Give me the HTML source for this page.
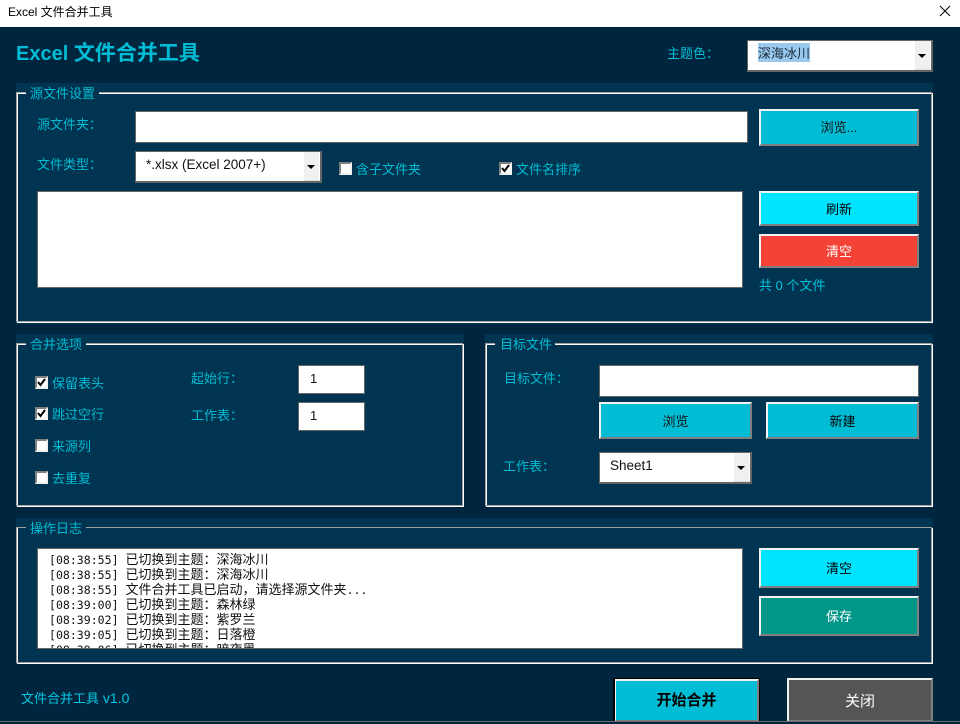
<!DOCTYPE html>
<html lang="zh">
<head>
<meta charset="utf-8">
<title>Excel 文件合并工具</title>
<style>
html,body{margin:0;padding:0}
body{width:960px;height:722px;overflow:hidden;position:relative;background:#00253f;font-family:"Liberation Sans","Noto Sans CJK SC",sans-serif;font-size:13px}
div,span.a{position:absolute;box-sizing:border-box;white-space:nowrap}
.panel{background:#003450}
.frame{border:1px solid #a0a0a0;box-shadow:1px 1px 0 #fff,inset 1px 1px 0 #fff}
.gap{background:#003450;height:6px}
.t{color:#00bcd4;height:20px;line-height:20px;margin-top:1px}
.input{background:#fff;border:1px solid #666}
.btn{border-style:solid;border-width:2px;border-color:#f2f2f2 #808080 #808080 #f2f2f2;text-align:center;color:#000}
.combo{background:#fff;border:1px solid #666;border-right:2px solid #666;border-bottom:2px solid #666;color:#111;line-height:26px;padding-left:10px;font-size:13.5px}
.arrow{right:0;top:0;bottom:0;width:17px;background:#f0f0f0;border-left:1px solid #fff;border-right:1px solid #fff;border-bottom:1px solid #ddd}
.arrow:after{content:"";position:absolute;left:3px;top:13px;border-style:solid;border-width:4px 4px 0;border-color:#000 transparent transparent}
.chk{width:13px;height:13px;background:#fff;border:2px solid;border-color:#808080 #f0f0f0 #f0f0f0 #808080}
.chk svg{position:absolute;left:0;top:0}
</style>
</head>
<body>
<div style="left:0;top:0;width:960px;height:27px;background:#fff"></div>
<div style="left:8px;top:3px;height:20px;line-height:18px;color:#000;font-size:12px">Excel 文件合并工具</div>
<svg style="position:absolute;left:939px;top:5px" width="12" height="12" viewBox="0 0 12 12"><path d="M1 1L11 11M11 1L1 11" stroke="#000" stroke-width="1" fill="none"/></svg>

<div style="left:16px;top:41px;height:28px;line-height:26px;font-size:21px;font-weight:bold;color:#00bcd4"><span style="font-size:20px">Excel </span>文件合并工具</div>
<div class="t" style="left:667px;top:43px">主题色：</div>
<div class="combo" style="left:747px;top:40px;width:186px;height:32px"><div class="arrow"></div></div>
<div style="left:758px;top:43px;width:52px;height:19px;background:#99c9ef;color:#1a2a3a;line-height:21px">深海冰川</div>

<!-- Source panel -->
<div class="panel" style="left:16px;top:83px;width:917px;height:241px"></div>
<div class="frame" style="left:16px;top:92px;width:916px;height:230px"></div>
<div class="gap" style="left:26px;top:90px;width:73px"></div>
<div class="t" style="left:30px;top:83px">源文件设置</div>
<div class="t" style="left:37px;top:114px">源文件夹：</div>
<div class="input" style="left:135px;top:111px;width:613px;height:32px"></div>
<div class="btn" style="left:759px;top:109px;width:160px;height:37px;background:#00bcd4;line-height:34px;color:#111">浏览...</div>
<div class="t" style="left:37px;top:154px">文件类型：</div>
<div class="combo" style="left:135px;top:151px;width:187px;height:32px">*.xlsx (Excel 2007+)<div class="arrow"></div></div>
<div class="chk" style="left:339px;top:162px"></div>
<div class="t" style="left:356px;top:159px">含子文件夹</div>
<div class="chk" style="left:499px;top:162px"><svg width="9" height="9" viewBox="0 0 9 9"><path d="M1 4L3.5 7L8 1" stroke="#000" stroke-width="2" fill="none"/></svg></div>
<div class="t" style="left:516px;top:159px">文件名排序</div>
<div class="input" style="left:37px;top:191px;width:706px;height:97px"></div>
<div class="btn" style="left:759px;top:191px;width:160px;height:35px;background:#00e5ff;line-height:34px">刷新</div>
<div class="btn" style="left:759px;top:234px;width:160px;height:34px;background:#f44336;line-height:31px;color:#fff">清空</div>
<div class="t" style="left:759px;top:276px;margin-top:0;color:#00c4dc">共 0 个文件</div>

<!-- Merge options -->
<div class="panel" style="left:16px;top:334px;width:448px;height:173px"></div>
<div class="frame" style="left:16px;top:343px;width:447px;height:163px"></div>
<div class="gap" style="left:26px;top:341px;width:60px"></div>
<div class="t" style="left:30px;top:334px">合并选项</div>
<div class="chk" style="left:35px;top:376px"><svg width="9" height="9" viewBox="0 0 9 9"><path d="M1 4L3.5 7L8 1" stroke="#000" stroke-width="2" fill="none"/></svg></div>
<div class="t" style="left:52px;top:373px">保留表头</div>
<div class="chk" style="left:35px;top:407px"><svg width="9" height="9" viewBox="0 0 9 9"><path d="M1 4L3.5 7L8 1" stroke="#000" stroke-width="2" fill="none"/></svg></div>
<div class="t" style="left:52px;top:404px">跳过空行</div>
<div class="chk" style="left:35px;top:439px"></div>
<div class="t" style="left:52px;top:436px">来源列</div>
<div class="chk" style="left:35px;top:471px"></div>
<div class="t" style="left:52px;top:468px">去重复</div>
<div class="t" style="left:191px;top:368px">起始行：</div>
<div class="input" style="left:298px;top:365px;width:67px;height:29px;line-height:25px;padding-left:11px;color:#111">1</div>
<div class="t" style="left:191px;top:405px">工作表：</div>
<div class="input" style="left:298px;top:402px;width:67px;height:29px;line-height:25px;padding-left:11px;color:#111">1</div>

<!-- Target -->
<div class="panel" style="left:485px;top:334px;width:448px;height:173px"></div>
<div class="frame" style="left:485px;top:343px;width:447px;height:163px"></div>
<div class="gap" style="left:495px;top:341px;width:60px"></div>
<div class="t" style="left:500px;top:334px">目标文件</div>
<div class="t" style="left:504px;top:368px">目标文件：</div>
<div class="input" style="left:599px;top:365px;width:320px;height:32px"></div>
<div class="btn" style="left:599px;top:402px;width:153px;height:37px;background:#00bcd4;line-height:35px;color:#111">浏览</div>
<div class="btn" style="left:766px;top:402px;width:153px;height:37px;background:#00bcd4;line-height:35px">新建</div>
<div class="t" style="left:503px;top:456px">工作表：</div>
<div class="combo" style="left:599px;top:452px;width:153px;height:32px">Sheet1<div class="arrow"></div></div>

<!-- Log -->
<div class="panel" style="left:16px;top:518px;width:917px;height:146px"></div>
<div style="left:16px;top:527px;width:916px;height:136px;border:1px solid #a0a0a0;box-shadow:1px 1px 0 #fff,inset 1px 0 0 #fff"></div>
<div class="gap" style="left:26px;top:525px;width:60px"></div>
<div class="t" style="left:30px;top:518px">操作日志</div>
<div class="input" style="left:37px;top:548px;width:706px;height:101px;overflow:hidden;color:#111;line-height:15px;padding:3px 0 0 11px">
<div style="position:static"><span style="font:11.55px 'DejaVu Sans Mono',monospace">[08:38:55] </span>已切换到主题：深海冰川</div>
<div style="position:static"><span style="font:11.55px 'DejaVu Sans Mono',monospace">[08:38:55] </span>已切换到主题：深海冰川</div>
<div style="position:static"><span style="font:11.55px 'DejaVu Sans Mono',monospace">[08:38:55] </span>文件合并工具已启动，请选择源文件夹<span style="font:11.55px 'DejaVu Sans Mono',monospace">...</span></div>
<div style="position:static"><span style="font:11.55px 'DejaVu Sans Mono',monospace">[08:39:00] </span>已切换到主题：森林绿</div>
<div style="position:static"><span style="font:11.55px 'DejaVu Sans Mono',monospace">[08:39:02] </span>已切换到主题：紫罗兰</div>
<div style="position:static"><span style="font:11.55px 'DejaVu Sans Mono',monospace">[08:39:05] </span>已切换到主题：日落橙</div>
<div style="position:static"><span style="font:11.55px 'DejaVu Sans Mono',monospace">[08:39:06] </span>已切换到主题：暗夜黑</div>
</div>
<div class="btn" style="left:759px;top:548px;width:160px;height:40px;background:#00e5ff;line-height:38px">清空</div>
<div class="btn" style="left:759px;top:596px;width:160px;height:40px;background:#009688;line-height:38px;color:#fff">保存</div>

<!-- Footer -->
<div class="t" style="left:21px;top:687px;color:#00c8e0">文件合并工具<span style="font-size:14px"> v1.0</span></div>
<div style="left:613px;top:678px;width:147px;height:44px;border:1px solid #000;border-left-width:2px;border-bottom:0">
<div class="btn" style="left:0;top:0;right:0;bottom:0;border-left-width:1px;background:#00bcd4;line-height:40px;font-size:15px;font-weight:bold">开始合并</div></div>
<div class="btn" style="left:787px;top:678px;width:146px;height:44px;background:#555;line-height:44px;font-size:15px;color:#fff">关闭</div>
<div style="left:0;top:721px;width:960px;height:1px;background:#6a6a6a"></div>
</body>
</html>
